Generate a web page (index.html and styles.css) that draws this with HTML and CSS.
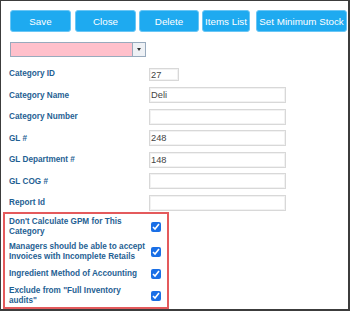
FILE: index.html
```html
<!DOCTYPE html>
<html>
<head>
<meta charset="utf-8">
<link rel="stylesheet" href="styles.css">
</head>
<body>
<div class="frame">
  <div class="toolbar">
    <button class="btn btn-save">Save</button>
    <button class="btn btn-close">Close</button>
    <button class="btn btn-delete">Delete</button>
    <button class="btn btn-items">Items List</button>
    <button class="btn btn-min">Set Minimum Stock</button>
  </div>
  <div class="combo">
    <div class="combo-field"></div>
    <div class="combo-arrow"><span class="tri"></span></div>
  </div>
  <div class="form">
    <label class="lbl">Category ID</label>
    <div class="field"><input class="inp inp-short" value="27"></div>
    <label class="lbl">Category Name</label>
    <div class="field"><input class="inp" value="Deli"></div>
    <label class="lbl">Category Number</label>
    <div class="field"><input class="inp" value=""></div>
    <label class="lbl">GL #</label>
    <div class="field"><input class="inp" value="248"></div>
    <label class="lbl">GL Department #</label>
    <div class="field"><input class="inp" value="148"></div>
    <label class="lbl">GL COG #</label>
    <div class="field"><input class="inp" value=""></div>
    <label class="lbl">Report Id</label>
    <div class="field"><input class="inp" value=""></div>
  </div>
  <div class="checks">
    <div class="crow">
      <span class="ctext">Don't Calculate GPM for This Category</span>
      <input type="checkbox" class="cb" checked>
    </div>
    <div class="crow">
      <span class="ctext">Managers should be able to accept Invoices with Incomplete Retails</span>
      <input type="checkbox" class="cb" checked>
    </div>
    <div class="crow">
      <span class="ctext">Ingredient Method of Accounting</span>
      <input type="checkbox" class="cb" checked>
    </div>
    <div class="crow">
      <span class="ctext">Exclude from "Full Inventory audits"</span>
      <input type="checkbox" class="cb" checked>
    </div>
  </div>
</div>
</body>
</html>
```
FILE: styles.css
```css
html, body {
  margin: 0;
  padding: 0;
  background: #fff;
}
.frame {
  width: 350px;
  height: 311px;
  box-sizing: border-box;
  border-style: solid;
  border-color: #3c3c3c;
  border-width: 1px 2px 2px 1px;
  padding: 9px 0 0 8px;
  font-family: "Liberation Sans", Arial, sans-serif;
  overflow: hidden;
}
.toolbar {
  display: flex;
  gap: 3px;
  margin-left: 1px;
}
.btn {
  height: 22px;
  box-sizing: border-box;
  background: #1eaaf0;
  color: #fff;
  border: 1px solid #6ac6f5;
  border-radius: 3px;
  font-family: "Liberation Sans", Arial, sans-serif;
  font-weight: normal;
  font-size: 9.8px;
  white-space: nowrap;
  padding: 0 2px;
  margin: 0;
  min-width: 61px;
  flex: none;
}
.btn-close { margin-left: 1px; }
.btn-delete { min-width: 60px; }
.btn-items { min-width: 48px; }
.btn-min { margin-left: 3px; min-width: 91px; }
.combo {
  display: flex;
  width: 136px;
  height: 15px;
  box-sizing: border-box;
  border: 1px solid #98aabd;
  margin: 10px 0 0 1px;
}
.combo-field {
  flex: 1;
  background: #ffc0cb;
  border-right: 1px solid #98aabd;
}
.combo-arrow {
  width: 12px;
  background: #eef1f5;
  display: flex;
  align-items: center;
  justify-content: center;
}
.tri {
  width: 0;
  height: 0;
  border-left: 2.5px solid transparent;
  border-right: 2.5px solid transparent;
  border-top: 3px solid #333;
}
.form {
  display: grid;
  grid-template-columns: 140px 137px;
  grid-auto-rows: 21.5px;
  align-items: center;
  margin-top: 6px;
}
.lbl {
  color: #1f6193;
  font-weight: bold;
  font-size: 8.2px;
}
.field {
  display: flex;
  align-items: center;
}
.inp {
  width: 137px;
  height: 16px;
  box-sizing: border-box;
  border: 1px solid #d8d8d8;
  box-shadow: inset 0 0 0 1px #f2f2f2;
  padding: 0 1px;
  margin: 0;
  font-family: "Liberation Sans", Arial, sans-serif;
  font-size: 9.3px;
  color: #444;
  outline: none;
}
.inp-short {
  width: 30px;
  height: 13px;
  margin-top: 2px;
}
.checks {
  margin: -1.5px 0 0 -6px;
  width: 166px;
  box-sizing: border-box;
  border: 2px solid #e45a5c;
  padding: 2.5px 6px 0 4px;
  display: flex;
  flex-direction: column;
  gap: 4px;
}
.crow {
  display: flex;
  align-items: center;
  justify-content: space-between;
  min-height: 15px;
}
.ctext {
  width: 140px;
  color: #1f6193;
  font-weight: bold;
  font-size: 8.2px;
  line-height: 10.5px;
}
.cb {
  width: 10px;
  height: 10px;
  margin: 0;
  accent-color: #1a6fe6;
}
```
